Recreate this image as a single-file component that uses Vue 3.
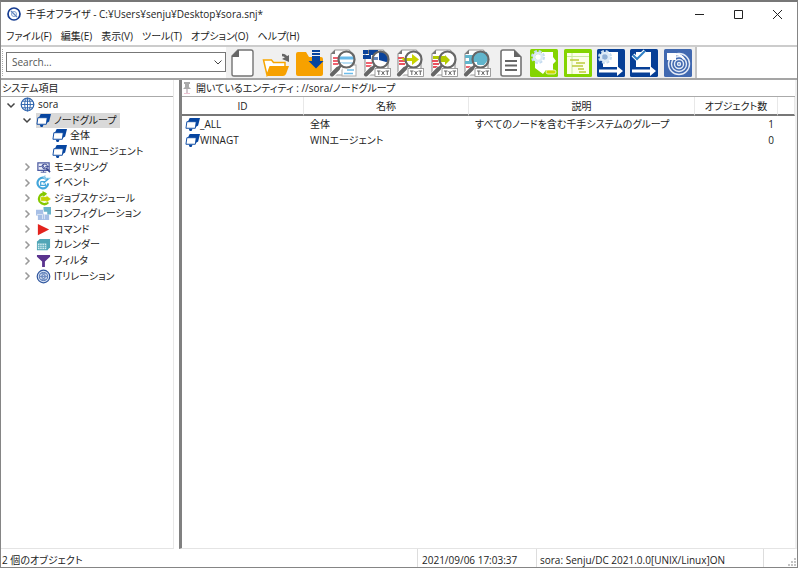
<script setup>
import { ref } from 'vue'

const search = ref('')
const menus = ['ファイル(F)', '編集(E)', '表示(V)', 'ツール(T)', 'オプション(O)', 'ヘルプ(H)']

const tools = [
  { icon: 'new', label: '新規' },
  { icon: 'open', label: '開く' },
  { icon: 'save', label: '保存' },
  { icon: 'find-doc', label: '文書の確認' },
  { icon: 'find-node', label: 'ノードのテキスト' },
  { icon: 'find-arrow', label: 'フローのテキスト' },
  { icon: 'find-job', label: 'ジョブのテキスト' },
  { icon: 'find-config', label: '構成のテキスト' },
  { icon: 'page', label: 'ログ' },
  { icon: 'job', label: 'ジョブ設定' },
  { icon: 'gantt', label: 'スケジュール' },
  { icon: 'export-gear', label: '設定の出力' },
  { icon: 'export-check', label: '検査の出力' },
  { icon: 'relation', label: 'ITリレーション' },
]

const tree = [
  { level: 0, state: 'open', icon: 'globe', text: 'sora' },
  { level: 1, state: 'open', icon: 'node', text: 'ノードグループ', selected: true },
  { level: 2, state: '', icon: 'node', text: '全体' },
  { level: 2, state: '', icon: 'node', text: 'WINエージェント' },
  { level: 1, state: 'closed', icon: 'monitor', text: 'モニタリング' },
  { level: 1, state: 'closed', icon: 'event', text: 'イベント' },
  { level: 1, state: 'closed', icon: 'schedule', text: 'ジョブスケジュール' },
  { level: 1, state: 'closed', icon: 'config', text: 'コンフィグレーション' },
  { level: 1, state: 'closed', icon: 'command', text: 'コマンド' },
  { level: 1, state: 'closed', icon: 'calendar', text: 'カレンダー' },
  { level: 1, state: 'closed', icon: 'filter', text: 'フィルタ' },
  { level: 1, state: 'closed', icon: 'rings', text: 'ITリレーション' },
]

const rows = [
  { id: '_ALL', name: '全体', desc: 'すべてのノードを含む千手システムのグループ', count: 1 },
  { id: 'WINAGT', name: 'WINエージェント', desc: '', count: 0 },
]
</script>

<template>
  <div class="window">
    <svg class="sprite" aria-hidden="true">
      <defs>
        <symbol id="lens" viewBox="0 0 28 28">
          <path d="M12 17 4 25" stroke="#fff" stroke-width="6" stroke-linecap="round" />
          <path d="M12 16.500 9 19.500" stroke="#666" stroke-width="2.500" />
          <path d="M9 19.500 3 25.500" stroke="#666" stroke-width="4" stroke-linecap="round" />
          <circle cx="17.500" cy="10.500" r="8" fill="none" stroke="#666" stroke-width="2.200" />
        </symbol>
        <symbol id="sheet" viewBox="0 0 28 28">
          <path d="M6 1h14l5 5v20H2V5z" fill="#fff" stroke="#999" stroke-width="1.200" />
          <path d="M2 5 6 1v4z" fill="#777" />
        </symbol>
        <symbol id="txt" viewBox="0 0 28 28">
          <rect x="12" y="19.500" width="15.500" height="8" fill="#fff" stroke="#888" stroke-width=".8" />
          <path d="M14 22h3.500m-1.700 0v4M18.500 22l3 4m0-4-3 4M22.500 22h3.500m-1.700 0v4" stroke="#666" stroke-width="1" fill="none" />
        </symbol>
        <symbol id="new" viewBox="0 0 28 28">
          <path d="M9 1h13q2 0 2 2v22q0 2-2 2H5q-2 0-2-2V7z" fill="#fff" stroke="#737373" stroke-width="1.400" />
          <path d="M3 8V7l6-6h1v7z" fill="#666" />
        </symbol>
        <symbol id="open" viewBox="0 0 28 28">
          <path d="M1.500 11h8l2 2.500H23V18H8l-3 8z" fill="#fff" stroke="#f7a600" stroke-width="1.500" />
          <path d="M8 17h19l-3 8q-1 2-3 2H5z" fill="#f7a100" />
          <path d="M20 6q4 0 5 4" fill="none" stroke="#666" stroke-width="2.500" />
          <path d="m20 10 7 3V6z" fill="#666" />
        </symbol>
        <symbol id="save" viewBox="0 0 28 28">
          <path d="M0 5q0-2 2-2h8l3 5h12q2 0 2 2v15q0 2-2 2H2q-2 0-2-2z" fill="#f7a100" />
          <path d="M16 1h8v2h-8zM16 4h8v2h-8zM16 7h8v5h3.500L20 19.500 12.500 12H16z" fill="#0645a0" />
        </symbol>
        <symbol id="find-doc" viewBox="0 0 28 28">
          <use href="#sheet" />
          <path d="M4 9h6M4 12h6M4 15h6" stroke="#ef6270" stroke-width="1.800" />
          <rect x="13" y="16" width="14" height="11" fill="#fff" stroke="#aaa" />
          <path d="M18 21h7M15 24.500h9" stroke="#6dbce9" stroke-width="1.400" />
          <circle cx="17.500" cy="10.500" r="8" fill="#fff" />
          <path d="M10 7.500h15v3H10z" fill="#67b8e8" /><path d="M11 13h13v2H11z" fill="#b9def4" />
          <use href="#lens" />
        </symbol>
        <symbol id="find-node" viewBox="0 0 28 28">
          <use href="#sheet" />
          <path d="M0 1h5v4H0zM6 1h9v5H6zM0 6h8v4H0z" fill="#0b439b" />
          <path d="M3 14h6M3 17h6" stroke="#ef6270" stroke-width="1.800" />
          <circle cx="17.500" cy="10.500" r="8" fill="#fff" />
          <path d="M16 3q7-1 9 5 1 5-2 5l-7-2z" fill="#0b439b" /><path d="M10 8h5v3h-5z" fill="#6687bb" />
          <use href="#lens" /><use href="#txt" />
        </symbol>
        <symbol id="find-arrow" viewBox="0 0 28 28">
          <use href="#sheet" />
          <path d="M2 9h6M3 12h6M3 15h6" stroke="#e9535f" stroke-width="1.800" />
          <circle cx="17.500" cy="10.500" r="8" fill="#fff" />
          <path d="M5 9h11V5l7 5.500-7 5.500v-4H8z" fill="#c8d300" />
          <use href="#lens" /><use href="#txt" />
        </symbol>
        <symbol id="find-job" viewBox="0 0 28 28">
          <use href="#sheet" />
          <path d="M2 12h6M3 15h6M3 18h5" stroke="#e9535f" stroke-width="1.800" />
          <circle cx="17.500" cy="10.500" r="8" fill="#fff" />
          <path d="M3 7h12V6l5 5-5 5v-3H9l-1-3H3z" fill="#b3cb00" />
          <use href="#lens" /><use href="#txt" />
        </symbol>
        <symbol id="find-config" viewBox="0 0 28 28">
          <use href="#sheet" />
          <circle cx="17.500" cy="10.500" r="8" fill="#fff" />
          <path d="M2 6h10V3h12l1 8-4 5h-7v-3H9v2H2v-3h4V9H2z" fill="#61b5cc" />
          <path d="M3 18h5" stroke="#e9535f" stroke-width="1.800" />
          <use href="#lens" /><use href="#txt" />
        </symbol>
        <symbol id="page" viewBox="0 0 28 28">
          <path d="M6 1h11l7 7v17q0 2-2 2H6q-2 0-2-2V3q0-2 2-2z" fill="#fff" stroke="#737373" stroke-width="1.600" />
          <path d="M17 1v7h7z" fill="#666" />
          <path d="M8 12h12M8 16.500h12M8 21h12" stroke="#666" stroke-width="1.800" />
        </symbol>
        <symbol id="gear" viewBox="0 0 28 28">
          <circle cx="8" cy="8" r="5.500" fill="none" stroke="#c5dcef" stroke-width="3" stroke-dasharray="2.600 1.720" />
          <circle cx="8" cy="8" r="4" fill="none" stroke="#dceaf6" stroke-width="2.600" />
        </symbol>
        <symbol id="job" viewBox="0 0 28 28">
          <rect width="28" height="28" rx="1.500" fill="#84d400" />
          <path d="M12 3h11v5l3 4-3 3v6h-7l-3 4-4-3-4-3v-7l3-3z" fill="#fff" />
          <circle cx="8" cy="8" r="3" fill="#fff" />
          <use href="#gear" />
          <rect x="16" y="21" width="10" height="4" rx="2" fill="#cbd900" stroke="#fff" stroke-width=".7" />
        </symbol>
        <symbol id="gantt" viewBox="0 0 28 28">
          <rect width="28" height="28" rx="1.500" fill="#84d400" />
          <rect x="3" y="4" width="22" height="21" fill="#fdffe8" />
          <path d="M3 7.500h22M8 4v21" stroke="#c9e8a0" />
          <path d="M6 11h9M12 14h9M8 17h11M14 20h6M15 23h7" stroke="#bccb3a" stroke-width="1.600" />
        </symbol>
        <symbol id="export-gear" viewBox="0 0 28 28">
          <rect width="28" height="28" rx="1.500" fill="#063f96" />
          <path d="M8 3h13v15H6v-8z" fill="#fff" />
          <path d="M2 20.500h18V17l6 5-6 5v-3.500H2z" fill="#fff" />
          <circle cx="8" cy="8" r="3" fill="#8fb0d6" />
          <use href="#gear" />
        </symbol>
        <symbol id="export-check" viewBox="0 0 28 28">
          <rect width="28" height="28" rx="1.500" fill="#063f96" />
          <path d="M6 3h15v15H6z" fill="#fff" />
          <path d="M2 20.500h18V17l6 5-6 5v-3.500H2z" fill="#fff" />
          <path d="m3 6 4 4 8-8" fill="none" stroke="#fff" stroke-width="4" />
          <path d="m3 6 4 4 8-8" fill="none" stroke="#2f80c5" stroke-width="2" />
        </symbol>
        <symbol id="relation" viewBox="0 0 28 28">
          <rect width="28" height="28" rx="1.500" fill="#4169b0" />
          <g fill="none" stroke="#e5ecf7" stroke-width="1.400">
            <circle cx="15" cy="15" r="10.500" /><circle cx="15" cy="15" r="7.500" />
            <circle cx="15" cy="15" r="4.500" /><circle cx="15" cy="15" r="1.500" />
          </g>
          <path d="M3 4h9v7H3z" fill="#fff" />
          <path d="M12 5.500q6 0 8 5" stroke="#fff" stroke-width="2" fill="none" />
        </symbol>

        <symbol id="globe" viewBox="0 0 16 16">
          <g fill="#fff" stroke="#2d63ad" stroke-width="1">
            <circle cx="8" cy="8" r="6.700" stroke-width="1.300" /><ellipse cx="8" cy="8" rx="3" ry="6.700" />
            <path d="M8 1v14M1 8h14M2.300 4.500h11.400M2.300 11.500h11.400" />
          </g>
        </symbol>
        <symbol id="node" viewBox="0 0 16 16">
          <path d="M5 1h11l-2 8-3 2V5H3z" fill="#0645a0" />
          <path d="M2 5h10l-1 7H1z" fill="#fff" stroke="#0645a0" stroke-width="1" />
          <path d="M4 12.500h4l-1 2.500H5z" fill="#0645a0" />
        </symbol>
        <symbol id="monitor" viewBox="0 0 16 16">
          <path d="M2 3h12v8H2z" fill="#e9edf8" stroke="#4c5aa0" stroke-width="1.300" />
          <path d="M3 7h3l1-2 2 4 1-2h4M5 13h6M8 11v2" fill="none" stroke="#4c5aa0" />
          <circle cx="9.500" cy="7" r="2.700" fill="none" stroke="#39458f" />
          <path d="m11 9 4 4" stroke="#39458f" stroke-width="1.700" />
        </symbol>
        <symbol id="event" viewBox="0 0 16 16">
          <path d="M10 3.500A5.700 5.700 0 1 0 13 9" fill="none" stroke="#43a6db" stroke-width="2.300" />
          <path d="m7 2 3-2v3h6l-5 4z" fill="#8fcae9" />
          <path d="M5 7h5M5 7v4h5V9M8 9l5-5" fill="none" stroke="#43a6db" stroke-width="1.300" />
        </symbol>
        <symbol id="schedule" viewBox="0 0 16 16">
          <path d="M10 3A5.500 5.500 0 1 0 13 12" fill="none" stroke="#85c800" stroke-width="2.600" />
          <path d="m7 0 5 3-5 4z" fill="#85c800" />
          <path d="M5 6h6V4.500l5 4-5 4V11H5z" fill="#c4d400" stroke="#fff" stroke-width=".5" />
        </symbol>
        <symbol id="config" viewBox="0 0 16 16">
          <path d="M0 4h8v5h6v6H2v-5H0z" fill="#a7bfe6" />
          <path d="M8 1h8v8h-4V6H8z" fill="#69b2ca" />
          <path d="M1 9h6v5M9 9v5M8 4v4" fill="none" stroke="#fff" stroke-width=".6" />
        </symbol>
        <symbol id="command" viewBox="0 0 16 16"><path d="m2 2 12 6-12 6z" fill="#e3231d" /></symbol>
        <symbol id="calendar" viewBox="0 0 16 16">
          <path d="m1 5 3-3h11v9l-3 3H1z" fill="#51a6b7" />
          <path d="M2 7h9v6H2z" fill="#d9f0f4" />
          <path d="M2 9h9M2 11h9M4 7v6M6.500 7v6M9 7v6M12 5v9M1 5h11l3-3" fill="none" stroke="#51a6b7" stroke-width=".7" />
        </symbol>
        <symbol id="filter" viewBox="0 0 16 16"><path d="M1 2h14v2L9.500 9v6h-3V9L1 4z" fill="#5b348f" /></symbol>
        <symbol id="rings" viewBox="0 0 16 16">
          <circle cx="8" cy="8" r="6.700" fill="#d5e0f2" stroke="#31579f" stroke-width="1.300" />
          <circle cx="8" cy="8" r="4.300" fill="none" stroke="#496dae" />
          <circle cx="8" cy="8" r="2" fill="none" stroke="#496dae" />
          <path d="M4 5h8M4 8h8M5 11h6" stroke="#6e8bc0" />
        </symbol>
      </defs>
    </svg>

    <header class="titlebar">
      <svg class="logo" viewBox="0 0 16 16">
        <circle cx="8" cy="8" r="6" fill="#fff" stroke="#163c91" stroke-width="1.700" />
        <circle cx="8" cy="8" r="2.500" fill="none" stroke="#7f9fcd" />
        <path d="m5 5 6 6" stroke="#5f83bd" stroke-width="1.200" />
      </svg>
      <h1>千手オフライザ - C:¥Users¥senju¥Desktop¥sora.snj*</h1>
      <div class="caption">
        <button aria-label="最小化"><svg viewBox="0 0 10 10"><path d="M1 5.500h9" /></svg></button>
        <button aria-label="最大化"><svg viewBox="0 0 10 10"><path d="M1.500 1.500h8v8h-8z" /></svg></button>
        <button aria-label="閉じる"><svg viewBox="0 0 10 10"><path d="m1 1 9 9M10 1 1 10" /></svg></button>
      </div>
    </header>

    <nav class="menubar">
      <button v-for="m in menus" :key="m">{{ m }}</button>
    </nav>

    <div class="toolbar">
      <div class="grip"></div>
      <div class="combo">
        <input v-model="search" type="text" placeholder="Search..." aria-label="Search" />
        <button aria-label="候補を開く"><svg viewBox="0 0 10 10"><path d="m1.500 3.500 3.500 3.500 3.500-3.500" /></svg></button>
      </div>
      <div class="tools">
        <button v-for="t in tools" :key="t.icon" :aria-label="t.label">
          <svg><use :href="'#' + t.icon" /></svg>
        </button>
      </div>
    </div>

    <main class="body">
      <aside class="side">
        <h2>システム項目</h2>
        <ul class="tree">
          <li v-for="n in tree" :key="n.text" :class="['level-' + n.level, { selected: n.selected }]">
            <svg class="twist" viewBox="0 0 10 10">
              <path v-if="n.state === 'open'" class="down" d="m1.500 3.500 3.500 3.500 3.500-3.500" />
              <path v-else-if="n.state === 'closed'" class="right" d="m3.500 1.500 3.500 3.500-3.500 3.500" />
            </svg>
            <span class="item"><svg class="icon"><use :href="'#' + n.icon" /></svg><span class="text">{{ n.text }}</span></span>
          </li>
        </ul>
      </aside>

      <section class="content">
        <h2>
          <svg class="pin" viewBox="0 0 10 14">
            <path d="M2 1h6v2H7v3l2 2H1l2-2V3H2z" fill="#aaa" /><path d="M5 8v5" stroke="#c6b6be" stroke-width="1.500" />
            <path d="M2 12.500h6" stroke="#ecc3d2" />
          </svg>
          開いているエンティティ : //sora/ノードグループ
        </h2>
        <table>
          <colgroup><col class="c-id" /><col class="c-name" /><col class="c-desc" /><col class="c-count" /><col class="c-rest" /></colgroup>
          <thead>
            <tr><th>ID</th><th>名称</th><th>説明</th><th>オブジェクト数</th><th></th></tr>
          </thead>
          <tbody>
            <tr v-for="r in rows" :key="r.id">
              <td><span class="cell"><svg class="icon"><use href="#node" /></svg>{{ r.id }}</span></td>
              <td>{{ r.name }}</td>
              <td>{{ r.desc }}</td>
              <td class="num">{{ r.count }}</td>
              <td></td>
            </tr>
          </tbody>
        </table>
      </section>
    </main>

    <footer class="status">
      <span class="objects">2 個のオブジェクト</span>
      <span class="time">2021/09/06 17:03:37</span>
      <span class="server">sora: Senju/DC 2021.0.0[UNIX/Linux]ON</span>
      <span class="corner">
        <svg viewBox="0 0 10 10"><path d="M7 1h2v2H7zM4 4h2v2H4zM7 4h2v2H7zM1 7h2v2H1zM4 7h2v2H4zM7 7h2v2H7z" fill="#c4c4c4" /></svg>
      </span>
    </footer>
  </div>
</template>

<style>
body {
  margin: 0;
}
</style>

<style scoped>
* {
  box-sizing: border-box;
}
.window {
  display: flex;
  flex-direction: column;
  height: 100vh;
  border: 1px solid #858585;
  border-top: 2px solid #777;
  background: #fff;
  color: #222;
  font-family: "Open Sans", "Noto Sans CJK JP", sans-serif;
  font-size: 10px;
  line-height: 16px;
  font-feature-settings: "palt";
  white-space: nowrap;
}
.sprite {
  position: absolute;
  width: 0;
  height: 0;
}
button {
  display: flex;
  align-items: center;
  justify-content: center;
  padding: 0;
  border: 0;
  background: none;
  color: inherit;
  font: inherit;
  font-feature-settings: inherit;
}
h1,
h2 {
  margin: 0;
  font-size: inherit;
  font-weight: 400;
}
.titlebar {
  display: flex;
  align-items: center;
  height: 24px;
  padding-left: 5px;
}
.logo {
  width: 16px;
  height: 16px;
  margin-right: 4px;
}
.caption {
  display: flex;
  margin-left: auto;
  padding-right: 1px;
}
.caption button {
  width: 39px;
  height: 24px;
}
.caption svg {
  width: 10px;
  height: 10px;
  overflow: visible;
  fill: none;
  stroke: #222;
}
.menubar {
  display: flex;
  gap: 9px;
  height: 19px;
  padding-left: 5px;
}
.toolbar {
  display: flex;
  height: 35px;
  border-top: 2px solid #ccc;
  border-bottom: 2px solid #a5a5a5;
}
.grip {
  width: 3px;
  margin: 2px 1px;
  border-left: 1px dotted #aaa;
}
.combo {
  display: flex;
  align-items: center;
  width: 220px;
  height: 20px;
  margin-top: 5px;
  border: 1px solid #777;
}
.combo input {
  flex: 1;
  min-width: 0;
  padding: 0 5px;
  border: 0;
  outline: 0;
  background: none;
  font: inherit;
}
.combo input::placeholder {
  color: #555;
}
.combo button {
  width: 14px;
}
.combo svg {
  width: 10px;
  height: 10px;
  fill: none;
  stroke: #444;
}
.tools {
  display: flex;
  align-items: center;
  justify-content: space-between;
  width: 471px;
  padding: 0 3px;
  border-right: 2px solid #c4c4c4;
  background: #f0f0f0;
}
.tools svg {
  display: block;
  width: 28px;
  height: 28px;
}
.body {
  display: flex;
  flex: 1;
  min-height: 0;
}
.side {
  width: 173px;
  border-right: 1px solid #e8e8e8;
  border-bottom: 1px solid #e4e4e4;
}
.content {
  flex: 1;
  margin-left: 5px;
  border-left: 3px solid #808080;
  border-right: 2px solid #f0f0f0;
  border-bottom: 1px solid #e4e4e4;
}
h2 {
  display: flex;
  align-items: center;
  height: 17px;
  border-bottom: 1px solid #aaa;
}
.side h2 {
  padding-left: 1px;
}
.pin {
  width: 10px;
  height: 14px;
  margin-right: 4px;
}
.tree {
  display: flex;
  flex-direction: column;
  height: 187px;
  margin: 0;
  padding: 0;
  list-style: none;
}
.tree li {
  display: flex;
  flex: 1;
  align-items: center;
  min-height: 0;
}
.level-0 {
  padding-left: 5px;
}
.level-1 {
  padding-left: 21px;
}
.level-2 {
  padding-left: 37px;
}
.twist {
  width: 10px;
  height: 10px;
  margin-right: 4px;
  fill: none;
  stroke-width: 1.5px;
}
.down {
  stroke: #444;
}
.right {
  stroke: #999;
}
.item {
  display: flex;
  align-items: center;
}
.icon {
  flex: none;
  width: 15px;
  height: 15px;
}
.text {
  padding: 0 3px;
  line-height: 15px;
}
.selected .item {
  background: #d9d9d9;
}
table {
  width: 100%;
  border-collapse: separate;
  border-spacing: 0;
  table-layout: fixed;
}
.c-id {
  width: 122px;
}
.c-name {
  width: 165px;
}
.c-count {
  width: 83px;
}
.c-rest {
  width: 17px;
}
th {
  height: 19px;
  padding: 0;
  border-right: 1px solid #e8e8e8;
  border-bottom: 2px solid #777;
  font-weight: 400;
}
td {
  height: 16px;
  padding: 0 6px;
}
tbody td:first-child {
  padding: 0 3px;
}
td.num {
  padding: 0 4px;
  text-align: right;
}
.cell {
  display: flex;
  align-items: center;
}
.status {
  display: flex;
  height: 18px;
  line-height: 22px;
}
.status span {
  border-right: 1px solid #ddd;
}
.status .objects {
  flex: 1;
  padding-left: 1px;
}
.time {
  width: 119px;
  padding-left: 4px;
}
.server {
  width: 227px;
  padding-left: 3px;
}
.status .corner {
  display: flex;
  align-items: flex-end;
  justify-content: flex-end;
  width: 33px;
  border: 0;
}
.corner svg {
  width: 10px;
  height: 10px;
}
</style>
